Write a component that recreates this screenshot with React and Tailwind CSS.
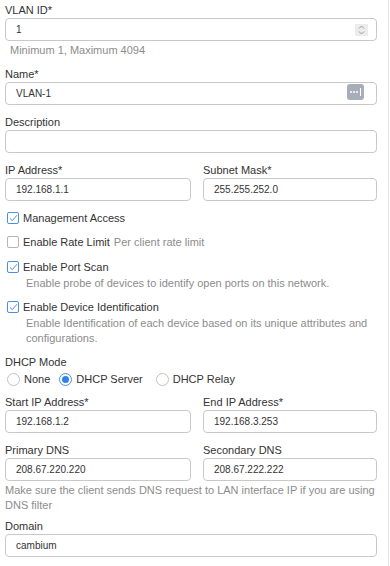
import React from "react";

const font = { fontFamily: '"Liberation Sans", Arial, sans-serif' };

function Label({ children, className = "" }) {
  return (
    <div className={`text-[11px] leading-[14px] text-[#333333] ${className}`}>
      {children}
    </div>
  );
}

function Input({ value, children, className = "" }) {
  return (
    <div
      className={`relative mt-[1px] flex h-[23px] items-center rounded-[4px] border border-[#c9c9c9] bg-white pl-[10px] text-[10px] text-[#333333] ${className}`}
    >
      <span>{value}</span>
      {children}
    </div>
  );
}

function Checkbox({ checked }) {
  return (
    <span
      className={`flex h-[12px] w-[12px] shrink-0 items-center justify-center rounded-[2px] border bg-white ${
        checked ? "border-[#4a90e2]" : "border-[#b5b5b5]"
      }`}
    >
      {checked && (
        <svg width="9" height="8" viewBox="0 0 9 8">
          <path d="M1 4.5 L3.3 6.6 L8 1.2" fill="none" stroke="#4a90e2" strokeWidth="1" />
        </svg>
      )}
    </span>
  );
}

function Radio({ checked }) {
  return (
    <span
      className={`flex h-[13px] w-[13px] shrink-0 items-center justify-center rounded-full border bg-white ${
        checked ? "border-[#4a90e2]" : "border-[#c2c2c2]"
      }`}
    >
      {checked && <span className="h-[7px] w-[7px] rounded-full bg-[#2f80ed]" />}
    </span>
  );
}

function CheckRow({ checked, label, note, className = "" }) {
  return (
    <div className={`flex items-center pl-[2px] text-[11px] leading-[14px] text-[#333333] ${className}`}>
      <Checkbox checked={checked} />
      <span className="ml-[4px]">{label}</span>
      {note && <span className="ml-[4px] text-[#8c8c8c]">{note}</span>}
    </div>
  );
}

export default function App() {
  return (
    <div className="flex h-[566px] w-[390px] bg-white" style={font}>
      <div className="w-[389px] border-r border-[#e6e6e6]">
        <div className="ml-[5px] w-[372px] pt-[3px]">
          <Label>VLAN ID*</Label>
          <Input value="1">
            <span className="absolute right-[8px] top-[5px] flex h-[12px] w-[13px] flex-col items-center justify-center bg-[#ececec]">
              <svg width="7" height="10" viewBox="0 0 7 10">
                <path d="M1 3.5 L3.5 1 L6 3.5 M1 6.5 L3.5 9 L6 6.5" fill="none" stroke="#9a9a9a" strokeWidth="1" />
              </svg>
            </span>
          </Input>
          <div className="mt-[2px] pl-[5px] text-[11px] leading-[14px] text-[#8c8c8c]">
            Minimum 1, Maximum 4094
          </div>

          <Label className="mt-[10px]">Name*</Label>
          <Input value="VLAN-1">
            <span className="absolute right-[12px] top-[1px] flex h-[16px] w-[17px] items-center justify-center gap-[1px] rounded-[3px] bg-[#a7aeb9]">
              <span className="h-[2px] w-[2px] rounded-full bg-white" />
              <span className="h-[2px] w-[2px] rounded-full bg-white" />
              <span className="h-[2px] w-[2px] rounded-full bg-white" />
              <span className="ml-[1px] h-[8px] w-[1px] bg-white" />
            </span>
          </Input>

          <Label className="mt-[10px]">Description</Label>
          <Input value="" />

          <div className="mt-[10px] grid grid-cols-[186px_174px] gap-x-[12px]">
            <div>
              <Label>IP Address*</Label>
              <Input value="192.168.1.1" />
            </div>
            <div>
              <Label>Subnet Mask*</Label>
              <Input value="255.255.252.0" />
            </div>
          </div>

          <CheckRow className="mt-[10px]" checked label="Management Access" />
          <CheckRow className="mt-[10px]" label="Enable Rate Limit" note="Per client rate limit" />
          <CheckRow className="mt-[11px]" checked label="Enable Port Scan" />
          <div className="mt-[2px] pl-[21px] text-[11px] leading-[15px] text-[#8c8c8c]">
            Enable probe of devices to identify open ports on this network.
          </div>
          <CheckRow className="mt-[9px]" checked label="Enable Device Identification" />
          <div className="mt-[2px] pl-[21px] text-[11px] leading-[15px] text-[#8c8c8c]">
            Enable Identification of each device based on its unique attributes and configurations.
          </div>

          <Label className="mt-[9px]">DHCP Mode</Label>
          <div className="mt-[2px] flex h-[16px] items-center pl-[2px] text-[11px] text-[#333333]">
            <Radio />
            <span className="ml-[4px]">None</span>
            <span className="ml-[9px]"><Radio checked /></span>
            <span className="ml-[4px]">DHCP Server</span>
            <span className="ml-[13px]"><Radio /></span>
            <span className="ml-[4px]">DHCP Relay</span>
          </div>

          <div className="mt-[8px] grid grid-cols-[186px_174px] gap-x-[12px]">
            <div>
              <Label>Start IP Address*</Label>
              <Input value="192.168.1.2" />
            </div>
            <div>
              <Label>End IP Address*</Label>
              <Input value="192.168.3.253" />
            </div>
          </div>

          <div className="mt-[10px] grid grid-cols-[186px_174px] gap-x-[12px]">
            <div>
              <Label>Primary DNS</Label>
              <Input value="208.67.220.220" />
            </div>
            <div>
              <Label>Secondary DNS</Label>
              <Input value="208.67.222.222" />
            </div>
          </div>
          <div className="mt-[2px] text-[11px] leading-[15px] text-[#8c8c8c]">
            Make sure the client sends DNS request to LAN interface IP if you are using DNS filter
          </div>

          <Label className="mt-[6px]">Domain</Label>
          <Input value="cambium" />
        </div>
      </div>
    </div>
  );
}
